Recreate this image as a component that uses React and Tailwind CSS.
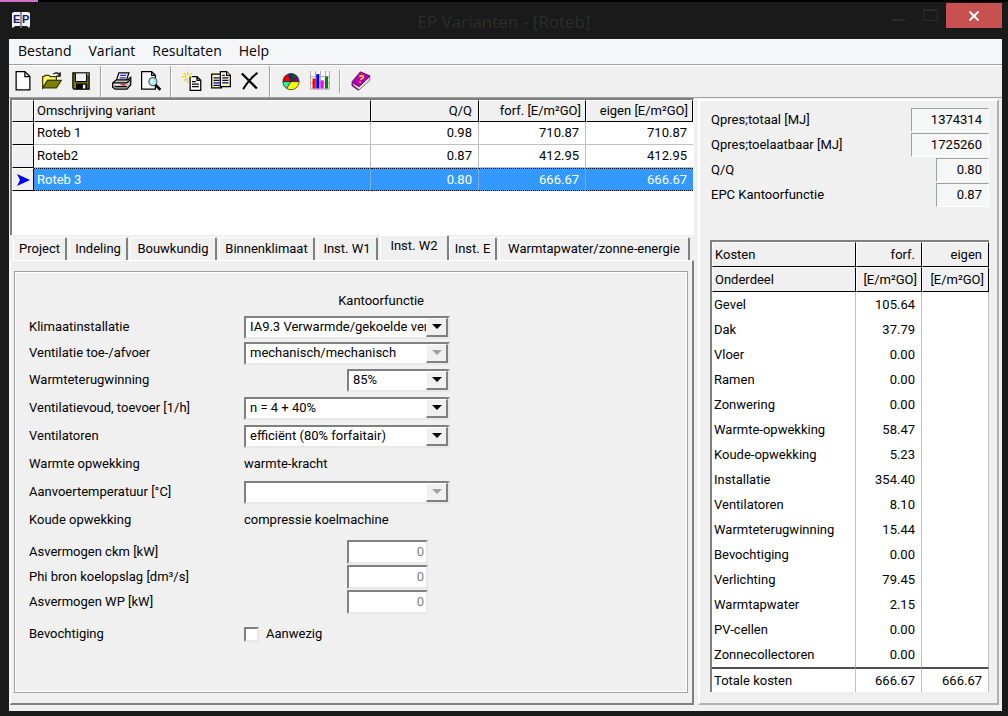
import { clsx } from "clsx";

const menus = ["Bestand", "Variant", "Resultaten", "Help"];

const variants = [
  { name: "Roteb 1", qq: "0.98", forf: "710.87", eigen: "710.87" },
  { name: "Roteb2", qq: "0.87", forf: "412.95", eigen: "412.95" },
  { name: "Roteb 3", qq: "0.80", forf: "666.67", eigen: "666.67", selected: true },
];

const tabs = [
  { label: "Project", width: "w-[54px]" },
  { label: "Indeling", width: "w-[59px]" },
  { label: "Bouwkundig", width: "w-[87px]" },
  { label: "Binnenklimaat", width: "w-[96px]" },
  { label: "Inst. W1", width: "w-[61px]" },
  { label: "Inst. W2", width: "w-[69px]", active: true },
  { label: "Inst. E", width: "w-[48px]" },
  { label: "Warmtapwater/zonne-energie", width: "w-[191px]" },
];

const totals = [
  { label: "Qpres;totaal [MJ]", value: "1374314", width: "w-[78px]" },
  { label: "Qpres;toelaatbaar [MJ]", value: "1725260", width: "w-[78px]" },
  { label: "Q/Q", value: "0.80", width: "w-[53px]" },
  { label: "EPC Kantoorfunctie", value: "0.87", width: "w-[53px]" },
];

const costs = [
  ["Gevel", "105.64"],
  ["Dak", "37.79"],
  ["Vloer", "0.00"],
  ["Ramen", "0.00"],
  ["Zonwering", "0.00"],
  ["Warmte-opwekking", "58.47"],
  ["Koude-opwekking", "5.23"],
  ["Installatie", "354.40"],
  ["Ventilatoren", "8.10"],
  ["Warmteterugwinning", "15.44"],
  ["Bevochtiging", "0.00"],
  ["Verlichting", "79.45"],
  ["Warmtapwater", "2.15"],
  ["PV-cellen", "0.00"],
  ["Zonnecollectoren", "0.00"],
];

function Icon({ children }) {
  return (
    <svg viewBox="0 0 16 16" className="w-5 h-5" aria-hidden="true">
      {children}
    </svg>
  );
}

const toolGroups = [
  [
    {
      label: "Nieuw",
      art: (
        <path d="M2.500.500h7l4 4v10.500h-11zM9.500.500v4h4" fill="#fff" stroke="#000" />
      ),
    },
    {
      label: "Openen",
      art: (
        <>
          <path d="M.5 13.500v-9h1l1-1h3l1 1h5v3h-7z" fill="#ffff66" stroke="#3c3c00" />
          <path d="M.7 13.500l3.800-6h11l-4 6z" fill="#808000" stroke="#3c3c00" />
          <path d="M9 2.500c1.500-1.500 3.500-1.500 5 .5M14.500 1v3h-3" fill="none" stroke="#000" />
        </>
      ),
    },
    {
      label: "Opslaan",
      art: (
        <>
          <path d="M1.500 1.500h13v13h-12l-1-1z" fill="#808000" stroke="#000" />
          <path d="M4 2h8v6H4z" fill="#f0f0f0" />
          <path d="M3.500 2v6.500h9V2" fill="none" stroke="#000" />
          <path d="M4 10h9v4.500H4z" fill="#000" />
          <path d="M9.500 11h2v3h-2z" fill="#fff" />
          <path d="M13 2h1v1h-1z" fill="#fff" />
        </>
      ),
    },
  ],
  [
    {
      label: "Afdrukken",
      art: (
        <>
          <path d="M5.500 1.500h8l-2 6h-8z" fill="#fff" stroke="#000" />
          <path d="M6.500 3.500h5M6 5.500h5" stroke="#2020e0" />
          <path d="M.5 9.500l3-2.500h9l2.500-2v6l-3 3.500H2.500l-2-1.500z" fill="#c0c0c0" stroke="#000" />
          <path d="M1 9.500h11M12 9.500l3-3M2 12.500h10" fill="none" stroke="#000" />
          <path d="M7.500 11h3" stroke="#ff0000" />
          <path d="M2 10.800h4" stroke="#fff" />
        </>
      ),
    },
    {
      label: "Afdrukvoorbeeld",
      art: (
        <>
          <path d="M.5.500h8l3 3v11H.5zM8.500.500v3h3" fill="#fff" stroke="#000" />
          <circle cx="9.500" cy="8.500" r="3.200" fill="#a8f0f4" stroke="#606060" />
          <path d="M8 8.500l1.500-1.500" stroke="#fff" />
          <path d="M11.500 11l4 4" stroke="#000" strokeWidth="2" />
        </>
      ),
    },
  ],
  [
    {
      label: "Nieuwe variant",
      art: (
        <>
          <path d="M6.500 4.500h5.500l3 3v8H6.500zM12 4.500v3h3" fill="#fff" stroke="#000" />
          <path d="M8 8.500h3M8 10.500h5.500M8 12.500h5.500" stroke="#000" />
          <path d="M4.500.500v3M4.500 6v3.500M0 4.500h3.500M1.500 1.500l2 2M8 1.500l-2 2M1.500 8l2-2M6 4.500h2" stroke="#e6d800" />
        </>
      ),
    },
    {
      label: "Variant kopiëren",
      art: (
        <>
          <path d="M.5 2.500h8v11h-8z" fill="#fff9b0" stroke="#000" />
          <path d="M2 5.500h5M2 7.500h5M2 9.500h5M2 11.500h5" stroke="#000090" />
          <path d="M7.500.500h5l3 3v9h-8z" fill="#fff9b0" stroke="#000" />
          <path d="M12.500.500v3h3" fill="#fff" stroke="#000" />
          <path d="M9 3.500h2M9 5.500h5M9 7.500h5M9 9.500h5" stroke="#000090" />
        </>
      ),
    },
    {
      label: "Variant verwijderen",
      art: (
        <>
          <path d="M1.500 2l12 12" stroke="#000" strokeWidth="1.800" />
          <path d="M14 1.500C9 5 6 9 2.500 14.500" fill="none" stroke="#000" strokeWidth="1.500" />
        </>
      ),
    },
  ],
  [
    {
      label: "Taartdiagram",
      art: (
        <>
          <circle cx="8" cy="8.500" r="6.500" fill="#00b050" />
          <path d="M8 8.500L1.500 8.500A6.500 6.500 0 0 1 6 2.300z" fill="#f00000" />
          <path d="M8 8.500L6 2.300A6.500 6.500 0 0 1 9.800 2.200z" fill="#0030b0" />
          <path d="M8 8.500L9.800 2.200A6.500 6.500 0 0 1 12.500 3.800z" fill="#007000" />
          <path d="M8 8.500L12.500 3.800A6.500 6.500 0 0 1 14.500 8.500z" fill="#800080" />
          <path d="M8 8.500H14.500A6.500 6.500 0 0 1 4.500 14z" fill="#ffff00" />
          <path d="M8 8.500H1.500A6.500 6.500 0 0 0 4.500 14z" fill="#30f0a0" />
          <path d="M1.500 8.500h13M8 8.500l-2-6M8 8.500l1.800-6M8 8.500l4.500-4.500M8 8.500L4.500 14" stroke="#202020" strokeWidth=".6" />
          <circle cx="8" cy="8.500" r="6.500" fill="none" stroke="#303030" strokeWidth=".6" />
        </>
      ),
    },
    {
      label: "Staafdiagram",
      art: (
        <>
          <path d="M.5.500h15v13H.5z" fill="#fff" />
          <path d="M.5 0v14M4.500 0v14M8.500 0v14M12.500 0v14M15.500 0v14M0 4.500h16M0 9.500h16M0 14.500h16" stroke="#a8a8a8" strokeWidth=".8" />
          <path d="M2 6h2.500v8H2z" fill="#ff0000" />
          <path d="M5 2.500h2.500V14H5z" fill="#0000ff" />
          <path d="M8.500 7.500H11V14H8.500z" fill="#ff00ff" />
          <path d="M12 4.500h2.500V14H12z" fill="#008000" />
        </>
      ),
    },
  ],
  [
    {
      label: "Help",
      art: (
        <>
          <path d="M1 10v2l5 3.500 9-8V4.500L6 12z" fill="#e8e8e8" stroke="#707070" strokeWidth=".8" />
          <path d="M.7 8.700L7.500.7l7.800 3.300-8.800 8.500z" fill="#b400b4" stroke="#700070" strokeWidth=".8" />
          <path d="M1 9v2.500L6 15" fill="none" stroke="#800080" />
          <path d="M6.800 4.500c1.500-1.500 4-.5 2.800 1-.5.600-1.600.700-1.800 1.700M7.300 8.300v1" fill="none" stroke="#ffe000" strokeWidth="1.300" />
        </>
      ),
    },
  ],
];

function TitleBar() {
  return (
    <header className="bg-[#1a1a1a]">
      <div className="h-0.5 bg-black">
        <div className="w-[38px] h-full bg-[#d070c8]" />
      </div>
      <div className="h-[37px] flex items-start">
        <div className="w-[126px] pl-3 pt-[9px]">
          <svg viewBox="0 0 18 18" className="w-[18px] h-[18px]" role="img" aria-label="EP">
            <path d="M0 2l2-1h6l1 1 1-1h6l2 1v13l-1 2-2-2H10l-1 2-1-2H3l-2 2-1-1z" fill="#f4f4f4" />
            <path d="M9 2v14" stroke="#333" />
            <text x="1" y="12" fontSize="11" fontWeight="700" fontFamily="Liberation Sans, sans-serif" fill="#18187c">E</text>
            <text x="10" y="12" fontSize="11" fontWeight="700" fontFamily="Liberation Sans, sans-serif" fill="#18187c">P</text>
          </svg>
        </div>
        <h1 className="flex-1 pt-2 text-center text-[17px] leading-6 text-[#2d2d2d] font-['Open_Sans',sans-serif]">
          EP Varianten - [Roteb]
        </h1>
        <div className="flex mt-px mr-1.5 text-[#2b2b2b]">
          <button aria-label="Minimaliseren" className="w-8 h-[25px] flex justify-center pt-4">
            <span className="w-3.5 h-0.5 bg-current" />
          </button>
          <button aria-label="Maximaliseren" className="w-8 h-[25px] flex justify-center pt-1.5">
            <span className="w-[15px] h-3 border border-t-2 border-current" />
          </button>
          <button aria-label="Sluiten" className="w-14 h-[25px] flex items-center justify-center bg-[#c75050]">
            <svg viewBox="0 0 12 10" className="w-3 h-2.5">
              <path d="M1.500.500l9 9M10.500.500l-9 9" stroke="#fff" strokeWidth="2" />
            </svg>
          </button>
        </div>
      </div>
    </header>
  );
}

function Toolbar() {
  return (
    <div className="h-8 flex border-t border-white">
      {toolGroups.map((group, index) => (
        <div key={group[0].label} className="flex">
          {index > 0 && (
            <span
              className={clsx(
                "w-0.5 ml-1 mr-1.5 border-l border-[#a0a0a0] border-r border-r-white",
                index === 4 && "my-1"
              )}
            />
          )}
          {group.map((tool) => (
            <button key={tool.label} aria-label={tool.label} className="w-[29px] pr-0.5 pb-0.5 flex items-center justify-center">
              <Icon>{tool.art}</Icon>
            </button>
          ))}
        </div>
      ))}
    </div>
  );
}

const headCell =
  "bg-[#f0f0f0] font-normal border-t border-l border-t-white border-l-white border-b border-r border-b-black border-r-black";

function VariantTable() {
  return (
    <div className="h-[137px] bg-white border-t-2 border-l-2 border-[#808080] border-r border-r-white">
      <table className="w-full table-fixed border-separate border-spacing-0">
        <colgroup>
          <col className="w-[22px]" />
          <col />
          <col className="w-[108px]" />
          <col className="w-[107px]" />
          <col className="w-[107px]" />
        </colgroup>
        <thead>
          <tr className="h-[22px]">
            <th className={headCell} />
            <th className={clsx(headCell, "pl-0.5 text-left")}>Omschrijving variant</th>
            <th className={clsx(headCell, "pr-1.5 text-right")}>Q/Q</th>
            <th className={clsx(headCell, "pr-1 text-right")}>forf. [E/m²GO]</th>
            <th className={clsx(headCell, "pr-1 text-right")}>eigen [E/m²GO]</th>
          </tr>
        </thead>
        <tbody>
          {variants.map((v) => {
            const cell = v.selected
              ? "bg-[#3399ff] text-white border-y border-dotted border-black border-r-[#c0c0c0]"
              : "border-b border-[#c0c0c0]";
            return (
              <tr key={v.name} className="h-[23px]">
                <td className={headCell}>
                  {v.selected && (
                    <svg viewBox="0 0 15 14" className="mx-auto w-[15px] h-3.5">
                      <path d="M1 1l13 6-13 6 3-6z" fill="#0000ff" />
                    </svg>
                  )}
                </td>
                <td className={clsx(cell, "pl-[3px] border-r")}>{v.name}</td>
                <td className={clsx(cell, "pr-1.5 text-right border-r")}>{v.qq}</td>
                <td className={clsx(cell, "pr-1.5 text-right border-r")}>{v.forf}</td>
                <td className={clsx(cell, "pr-1.5 text-right")}>{v.eigen}</td>
              </tr>
            );
          })}
        </tbody>
      </table>
    </div>
  );
}

function Tabs() {
  return (
    <div role="tablist" className="h-[25px] flex items-end pl-[3px]">
      {tabs.map((tab) => (
        <button
          key={tab.label}
          role="tab"
          aria-selected={Boolean(tab.active)}
          className={clsx(
            tab.width,
            "shrink-0 whitespace-nowrap text-center border-t border-l border-white border-r-2 border-r-[#808080] rounded-t-xs",
            tab.active ? "h-[25px] pb-1" : "h-[23px] mr-0.5"
          )}
        >
          {tab.label}
        </button>
      ))}
    </div>
  );
}

const sunken = "bg-white border-2 border-[#808080] border-b-[#e8e8e8] border-r-[#e8e8e8]";

function Combo({ id, value, disabled, narrow }) {
  return (
    <div className={clsx("h-[23px] flex", sunken, narrow ? "w-[103px] ml-[103px]" : "w-[206px]")}>
      <select id={id} disabled={disabled} className="flex-1 min-w-0 appearance-none pl-1 bg-white text-black opacity-100 outline-none">
        <option>{value}</option>
      </select>
      <span className="w-[22px] flex items-center justify-center pointer-events-none bg-[#f0f0f0] border-t border-l border-white border-r-2 border-b-2 border-r-[#808080] border-b-[#808080]">
        <svg viewBox="0 0 10 5" className="w-2.5 h-[5px]">
          <path d="M0 0h10L5 5z" fill={disabled ? "#a0a0a0" : "#000"} />
        </svg>
      </span>
    </div>
  );
}

function Row({ label, id, className = "h-7", children }) {
  return (
    <div className={clsx("flex items-center", className)}>
      <label htmlFor={id} className="w-[215px] shrink-0 whitespace-nowrap">{label}</label>
      {children}
    </div>
  );
}

function PowerInput({ id }) {
  return (
    <input
      id={id}
      defaultValue="0"
      disabled
      className={clsx("w-[81px] h-6 ml-[103px] pr-0.5 text-right text-[#808080]", sunken)}
    />
  );
}

function InstallationForm() {
  return (
    <form className="flex-1 mt-2.5 ml-[3px] mr-1 mb-2.5 px-3.5 pt-4 border border-[#a0a0a0] outline-1 outline-white -outline-offset-2">
      <p className="h-[26px] w-[421px] pr-[26px] flex items-center justify-end">Kantoorfunctie</p>
      <Row label="Klimaatinstallatie" id="klimaat" className="h-[26px]">
        <Combo id="klimaat" value="IA9.3 Verwarmde/gekoelde ventilatielucht" />
      </Row>
      <Row label="Ventilatie toe-/afvoer" id="ventilatie" className="h-[26px]">
        <Combo id="ventilatie" value="mechanisch/mechanisch" disabled />
      </Row>
      <Row label="Warmteterugwinning" id="wtw">
        <Combo id="wtw" value="85%" narrow />
      </Row>
      <Row label="Ventilatievoud, toevoer [1/h]" id="voud">
        <Combo id="voud" value="n = 4 + 40%" />
      </Row>
      <Row label="Ventilatoren" id="ventilatoren">
        <Combo id="ventilatoren" value="efficiënt (80% forfaitair)" />
      </Row>
      <Row label="Warmte opwekking" id="warmte">
        <output id="warmte">warmte-kracht</output>
      </Row>
      <Row label="Aanvoertemperatuur [°C]" id="aanvoer">
        <Combo id="aanvoer" value="" disabled />
      </Row>
      <Row label="Koude opwekking" id="koude">
        <output id="koude">compressie koelmachine</output>
      </Row>
      <div className="mt-[5px] mb-1.5">
        <Row label="Asvermogen ckm [kW]" id="ckm" className="h-[25px]">
          <PowerInput id="ckm" />
        </Row>
        <Row label="Phi bron koelopslag [dm³/s]" id="phi" className="h-[25px]">
          <PowerInput id="phi" />
        </Row>
        <Row label="Asvermogen WP [kW]" id="wp" className="h-[25px]">
          <PowerInput id="wp" />
        </Row>
      </div>
      <Row label="Bevochtiging" id="bevochtiging">
        <input id="bevochtiging" type="checkbox" className={clsx("appearance-none w-[15px] h-[15px] mr-[7px]", sunken)} />
        <label htmlFor="bevochtiging">Aanwezig</label>
      </Row>
    </form>
  );
}

function CostTable() {
  return (
    <table className="mt-[33px] w-[279px] table-fixed border-separate border-spacing-0 bg-white border-t-2 border-l-2 border-[#808080]">
      <colgroup>
        <col />
        <col className="w-[66px]" />
        <col className="w-[67px]" />
      </colgroup>
      <thead>
        <tr className="h-[25px]">
          <th className={clsx(headCell, "pl-0.5 text-left")}>Kosten</th>
          <th className={clsx(headCell, "pr-1.5 text-right")}>forf.</th>
          <th className={clsx(headCell, "pr-1.5 text-right")}>eigen</th>
        </tr>
        <tr className="h-[25px]">
          <th className={clsx(headCell, "pl-0.5 text-left")}>Onderdeel</th>
          <th className={clsx(headCell, "pr-1 text-right")}>[E/m²GO]</th>
          <th className={clsx(headCell, "pr-1 text-right")}>[E/m²GO]</th>
        </tr>
      </thead>
      <tbody>
        {costs.map(([part, forf]) => (
          <tr key={part} className="h-[25px]">
            <td className="pl-0.5 border-r border-[#c0c0c0]">{part}</td>
            <td className="pr-1.5 text-right border-r border-[#c0c0c0]">{forf}</td>
            <td className="border-r border-[#c0c0c0]" />
          </tr>
        ))}
      </tbody>
      <tfoot>
        <tr className="h-[25px]">
          <td className="pl-0.5 border-t-2 border-t-[#505050] border-r border-r-[#c0c0c0]">Totale kosten</td>
          <td className="pr-1.5 text-right border-t-2 border-t-[#505050] border-r border-r-[#c0c0c0]">666.67</td>
          <td className="pr-1.5 text-right border-t-2 border-t-[#505050] border-r border-r-[#c0c0c0]">666.67</td>
        </tr>
      </tfoot>
    </table>
  );
}

function Summary() {
  return (
    <aside className="w-[301px] shrink-0 ml-1 mr-[3px] mt-px mb-1.5 pt-1.5 pl-[10px] border-2 border-white border-r-[#b0b0b0] border-b-[#b0b0b0]">
      <dl className="pl-px mr-2">
        {totals.map((t) => (
          <div key={t.label} className="h-[25px] flex items-center justify-between">
            <dt>{t.label}</dt>
            <dd
              className={clsx(
                t.width,
                "h-6 pr-1.5 text-right leading-[21px] bg-[#f5f7f6] border border-[#a0a0a0] border-b-white border-r-white"
              )}
            >
              {t.value}
            </dd>
          </div>
        ))}
      </dl>
      <CostTable />
    </aside>
  );
}

export default function App() {
  return (
    <div className="min-h-screen flex flex-col bg-[#1a1a1a] text-black text-[13px] leading-[18px] font-[Roboto,'Liberation_Sans',sans-serif]">
      <TitleBar />
      <main className="flex-1 flex flex-col ml-[9px] mr-1.5 mb-[5px] bg-[#f0f0f0]">
        <nav className="h-[26px] flex items-center gap-[17px] pl-[9px] pb-0.5 text-[14px] bg-[#f5f6f8] border-b border-[#a0a0a0] font-['Open_Sans',sans-serif]">
          {menus.map((menu) => (
            <button key={menu}>{menu}</button>
          ))}
        </nav>
        <Toolbar />
        <div className="flex-1 flex border-t border-[#a0a0a0]">
          <div className="flex-1 min-w-0 flex flex-col pl-px">
            <VariantTable />
            <Tabs />
            <section className="flex-1 flex flex-col mb-1.5 border border-white border-r-2 border-b-2 border-r-[#808080] border-b-[#808080]">
              <InstallationForm />
            </section>
          </div>
          <Summary />
        </div>
      </main>
    </div>
  );
}
